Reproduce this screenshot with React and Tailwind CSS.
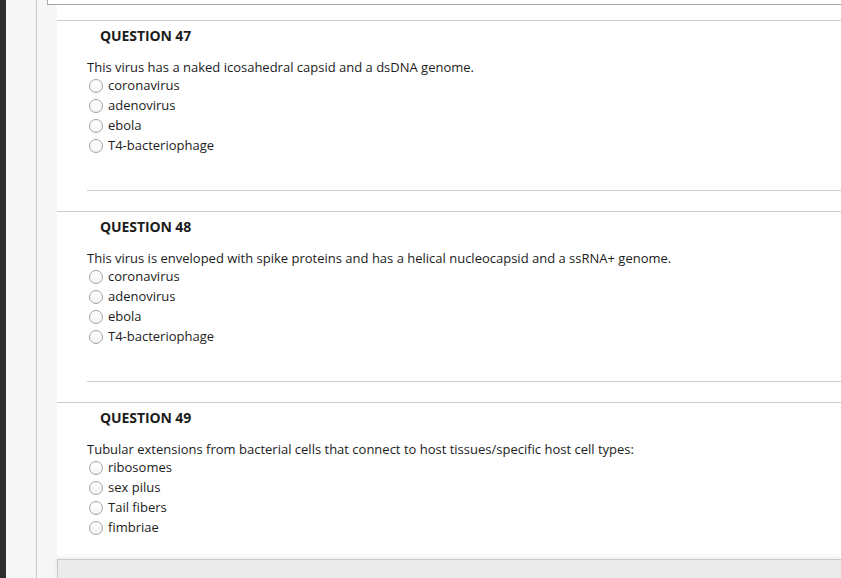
import React from "react";

const questions = [
  {
    n: 47,
    text: "This virus has a naked icosahedral capsid and a dsDNA genome.",
    options: ["coronavirus", "adenovirus", "ebola", "T4-bacteriophage"],
  },
  {
    n: 48,
    text: "This virus is enveloped with spike proteins and has a helical nucleocapsid and a ssRNA+ genome.",
    options: ["coronavirus", "adenovirus", "ebola", "T4-bacteriophage"],
  },
  {
    n: 49,
    text: "Tubular extensions from bacterial cells that connect to host tissues/specific host cell types:",
    options: ["ribosomes", "sex pilus", "Tail fibers", "fimbriae"],
  },
];

function Question({ q, last }) {
  return (
    <div className="border-t border-[#cdcdcd] pl-[30px]">
      <div className="pl-[13px] pt-[6px] text-[14px] font-bold leading-[18px] tracking-[-0.1px] text-[#1c1c1c]">
        QUESTION {q.n}
      </div>
      <div className="mt-[13px] text-[13px] leading-[18px] text-[#1c1c1c]">{q.text}</div>
      <div className="flex flex-col">
        {q.options.map((o) => (
          <label key={o} className="flex h-[20px] items-center text-[13px] text-[#1c1c1c]">
            <span className="ml-[2px] mr-[5px] h-[14px] w-[14px] rounded-full border border-[#a3a3a3] bg-gradient-to-b from-white to-[#f4f4f4]" />
            <span>{o}</span>
          </label>
        ))}
      </div>
      {!last && (
        <div className="pb-[20px]">
          <div className="h-[34px]" />
          <div className="border-b border-[#cdcdcd]" />
        </div>
      )}
    </div>
  );
}

export default function App() {
  return (
    <div
      className="flex h-[578px] w-[841px] overflow-hidden bg-white"
      style={{ fontFamily: '"Open Sans", "Noto Sans", sans-serif' }}
    >
      <div className="w-[6px] shrink-0 bg-[#2d2d2d]" />
      <div className="w-[31px] shrink-0 border-r border-[#c8c8c8] bg-[#f6f6f6]" />
      <div className="flex min-w-0 flex-1 flex-col bg-[#f6f6f6]">
        <div className="ml-[10px] h-[5px] shrink-0 border-b border-l border-[#a8a8a8] bg-white" />
        <div className="ml-[20px] flex min-h-0 flex-1 flex-col bg-white">
          <div className="h-[15px] shrink-0" />
          {questions.map((q, i) => (
            <Question key={q.n} q={q} last={i === questions.length - 1} />
          ))}
          <div className="flex-1" />
          <div className="h-[19px] shrink-0 border-l border-t border-[#c8c8c8] bg-[#ebebeb] shadow-[0_-2px_5px_rgba(0,0,0,0.07)]" />
        </div>
      </div>
    </div>
  );
}
